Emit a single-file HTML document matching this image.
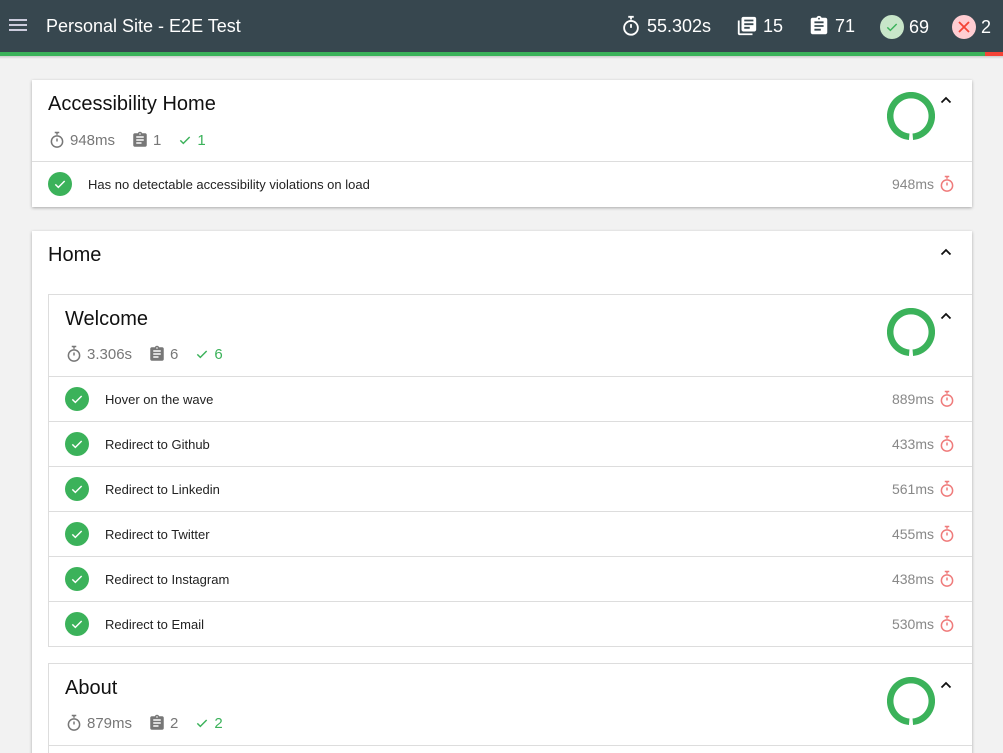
<!DOCTYPE html>
<html style="overflow:hidden;height:753px"><head><meta charset="utf-8"><style>
*{box-sizing:border-box;margin:0;padding:0}
body{width:1003px;height:753px;overflow:hidden;background:#f2f2f2;font-family:"Liberation Sans",Roboto,sans-serif;position:relative}
.hdr{position:absolute;left:0;top:0;width:1003px;height:52px;background:#37474f;color:#fff}
.bar{position:absolute;top:52px;left:0;height:4px;width:985px;background:#3bb25a}
.bar2{position:absolute;top:52px;left:985px;height:4px;width:18px;background:#f44336}
.shadow{position:absolute;top:56px;left:0;width:1003px;height:3px;background:linear-gradient(#ccc,#f2f2f2)}
.ttl{position:absolute;left:46px;top:16px;font-size:18px}
.hs{position:absolute;top:15px;font-size:18px;display:flex;align-items:center;gap:5px}
.card{position:absolute;left:32px;width:940px;background:#fff;box-shadow:0 1px 3px rgba(0,0,0,.3);overflow:hidden}
.h{position:absolute;font-size:20px;color:#111}
.stats{position:absolute;display:flex;align-items:center;font-size:15px;color:#777;gap:4px}
.row{position:absolute;height:45px;border-top:1px solid #ddd;font-size:13px;color:#222}
.row .ck{position:absolute;top:10px;width:24px;height:24px;border-radius:50%;background:#3bb25a}
.row .t{position:absolute;top:15px}
.row .d{position:absolute;right:16px;top:13px;font-size:14px;color:#888;display:flex;align-items:center;gap:4px}
.sub{position:absolute;left:16px;width:924px;border:1px solid #ddd;border-right:none}
.car{position:absolute;width:12px;height:8px}
</style></head><body>
<svg width="0" height="0" style="position:absolute"><defs>
<symbol id="tm" viewBox="0 0 24 24"><path fill="none" stroke="currentColor" stroke-width="2" d="M9 2h6M12 2v3"/><circle cx="12" cy="14" r="7.5" fill="none" stroke="currentColor" stroke-width="2"/><path d="M12 14V10" stroke="currentColor" stroke-width="2"/></symbol>
<symbol id="cl" viewBox="0 0 24 24"><path fill="currentColor" d="M19 3h-4.2C14.4 1.8 13.3 1 12 1s-2.4.8-2.8 2H5c-1.1 0-2 .9-2 2v14c0 1.1.9 2 2 2h14c1.1 0 2-.9 2-2V5c0-1.1-.9-2-2-2zm-7 0c.6 0 1 .4 1 1s-.4 1-1 1-1-.4-1-1 .4-1 1-1zm2 14H7v-2h7v2zm3-4H7v-2h10v2zm0-4H7V7h10v2z"/></symbol>
<symbol id="ok" viewBox="0 0 24 24"><path fill="none" stroke="currentColor" stroke-width="2.2" d="M5 12.5l4.5 4.5L19 7.5"/></symbol>
<symbol id="dn" viewBox="0 0 48 48"><path fill="none" stroke="#3bb25a" stroke-width="6.5" d="M22.2 44.7A20.8 20.8 0 1 1 25.8 44.7"/></symbol>
<symbol id="cv" viewBox="0 0 12 8"><path d="M1.5 6.5L6 2l4.5 4.5" fill="none" stroke="#111" stroke-width="1.8"/></symbol>
</defs></svg>
<div class="hdr">
<div style="position:absolute;left:9px;top:19px;width:18px;height:2px;background:#ccd;box-shadow:0 5px 0 #ccd,0 10px 0 #ccd"></div>
<div class="ttl">Personal Site - E2E Test</div>
<div class="hs" style="left:620px"><svg width="22" height="22" style="color:#fff"><use href="#tm"/></svg>55.302s</div>
<div class="hs" style="left:736px"><svg width="22" height="22" viewBox="0 0 24 24"><path fill="#fff" d="M4 6H2v14c0 1.1.9 2 2 2h14v-2H4V6zm16-4H8c-1.1 0-2 .9-2 2v12c0 1.1.9 2 2 2h12c1.1 0 2-.9 2-2V4c0-1.1-.9-2-2-2zm-1 9H9V9h10v2zm-4 4H9v-2h6v2zm4-8H9V5h10v2z"/></svg>15</div>
<div class="hs" style="left:808px"><svg width="22" height="22" style="color:#fff"><use href="#cl"/></svg>71</div>
<div class="hs" style="left:880px"><span style="width:24px;height:24px;border-radius:50%;background:#c8e6c9;display:inline-block;position:relative"><svg width="16" height="16" style="position:absolute;left:4px;top:4px;color:#3bb25a"><use href="#ok"/></svg></span>69</div>
<div class="hs" style="left:952px"><span style="width:24px;height:24px;border-radius:50%;background:#ffcdd2;display:inline-block;position:relative"><svg width="14" height="14" viewBox="0 0 14 14" style="position:absolute;left:5px;top:5px"><path d="M2 2l10 10M12 2L2 12" stroke="#f44336" stroke-width="1.8"/></svg></span>2</div>
</div>
<div class="bar"></div><div class="bar2"></div><div class="shadow"></div>

<div class="card" style="top:80px;height:127px">
<div class="h" style="left:16px;top:13px">Accessibility Home</div>
<div class="stats" style="left:16px;top:51px"><svg width="18" height="18" style="color:#777"><use href="#tm"/></svg>948ms<svg width="18" height="18" style="color:#777;margin-left:12px"><use href="#cl"/></svg>1<svg width="16" height="16" style="color:#3bb25a;margin-left:12px"><use href="#ok"/></svg><span style="color:#3bb25a">1</span></div>
<svg width="48" height="48" style="position:absolute;left:855px;top:12px"><use href="#dn"/></svg>
<svg class="car" style="left:908px;top:16px"><use href="#cv"/></svg>
<div class="row" style="left:0;top:81px;width:940px"><div class="ck" style="left:16px"><svg width="16" height="16" style="margin:4px;color:#fff"><use href="#ok"/></svg></div><div class="t" style="left:56px">Has no detectable accessibility violations on load</div><div class="d">948ms<svg width="18" height="18" style="color:#ef7b7b"><use href="#tm"/></svg></div></div>
</div>

<div class="card" style="top:231px;height:530px">
<div class="h" style="left:16px;top:13px">Home</div>
<svg class="car" style="left:908px;top:17px"><use href="#cv"/></svg>
<div class="sub" style="top:63px;height:353px">
<div class="h" style="left:16px;top:13px">Welcome</div>
<div class="stats" style="left:16px;top:50px"><svg width="18" height="18" style="color:#777"><use href="#tm"/></svg>3.306s<svg width="18" height="18" style="color:#777;margin-left:12px"><use href="#cl"/></svg>6<svg width="16" height="16" style="color:#3bb25a;margin-left:12px"><use href="#ok"/></svg><span style="color:#3bb25a">6</span></div>
<svg width="48" height="48" style="position:absolute;left:838px;top:13px"><use href="#dn"/></svg>
<svg class="car" style="left:891px;top:17px"><use href="#cv"/></svg>
<div class="row" style="left:0;top:81px;width:923px"><div class="ck" style="left:16px"><svg width="16" height="16" style="margin:4px;color:#fff"><use href="#ok"/></svg></div><div class="t" style="left:56px">Hover on the wave</div><div class="d">889ms<svg width="18" height="18" style="color:#ef7b7b"><use href="#tm"/></svg></div></div>
<div class="row" style="left:0;top:126px;width:923px"><div class="ck" style="left:16px"><svg width="16" height="16" style="margin:4px;color:#fff"><use href="#ok"/></svg></div><div class="t" style="left:56px">Redirect to Github</div><div class="d">433ms<svg width="18" height="18" style="color:#ef7b7b"><use href="#tm"/></svg></div></div>
<div class="row" style="left:0;top:171px;width:923px"><div class="ck" style="left:16px"><svg width="16" height="16" style="margin:4px;color:#fff"><use href="#ok"/></svg></div><div class="t" style="left:56px">Redirect to Linkedin</div><div class="d">561ms<svg width="18" height="18" style="color:#ef7b7b"><use href="#tm"/></svg></div></div>
<div class="row" style="left:0;top:216px;width:923px"><div class="ck" style="left:16px"><svg width="16" height="16" style="margin:4px;color:#fff"><use href="#ok"/></svg></div><div class="t" style="left:56px">Redirect to Twitter</div><div class="d">455ms<svg width="18" height="18" style="color:#ef7b7b"><use href="#tm"/></svg></div></div>
<div class="row" style="left:0;top:261px;width:923px"><div class="ck" style="left:16px"><svg width="16" height="16" style="margin:4px;color:#fff"><use href="#ok"/></svg></div><div class="t" style="left:56px">Redirect to Instagram</div><div class="d">438ms<svg width="18" height="18" style="color:#ef7b7b"><use href="#tm"/></svg></div></div>
<div class="row" style="left:0;top:306px;width:923px"><div class="ck" style="left:16px"><svg width="16" height="16" style="margin:4px;color:#fff"><use href="#ok"/></svg></div><div class="t" style="left:56px">Redirect to Email</div><div class="d">530ms<svg width="18" height="18" style="color:#ef7b7b"><use href="#tm"/></svg></div></div>
</div>
<div class="sub" style="top:432px;height:120px">
<div class="h" style="left:16px;top:13px">About</div>
<div class="stats" style="left:16px;top:50px"><svg width="18" height="18" style="color:#777"><use href="#tm"/></svg>879ms<svg width="18" height="18" style="color:#777;margin-left:12px"><use href="#cl"/></svg>2<svg width="16" height="16" style="color:#3bb25a;margin-left:12px"><use href="#ok"/></svg><span style="color:#3bb25a">2</span></div>
<svg width="48" height="48" style="position:absolute;left:838px;top:13px"><use href="#dn"/></svg>
<svg class="car" style="left:891px;top:17px"><use href="#cv"/></svg>
<div style="position:absolute;left:0;top:81px;width:923px;border-top:1px solid #ddd"></div>
</div>
</div>
</body></html>
